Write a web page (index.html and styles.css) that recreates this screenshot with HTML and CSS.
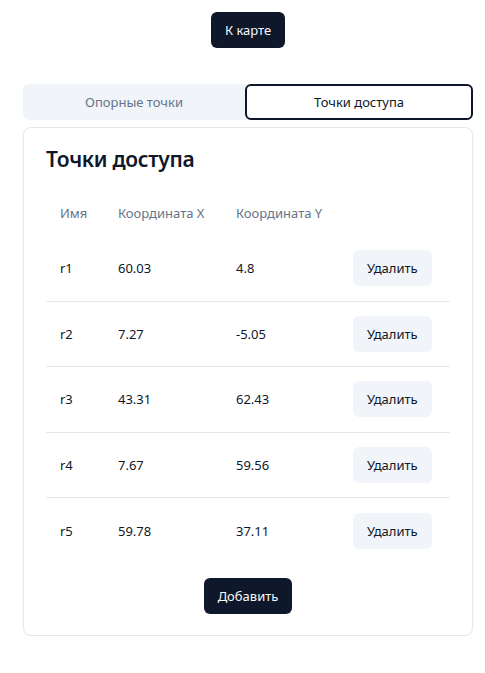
FILE: index.html
```html
<!DOCTYPE html>
<html lang="ru">
<head>
<meta charset="utf-8">
<link rel="stylesheet" href="styles.css">
</head>
<body>
<div class="page">
  <div class="top">
    <button class="btn btn-dark">К карте</button>
  </div>
  <div class="tabs">
    <button class="tab">Опорные точки</button>
    <button class="tab tab-active">Точки доступа</button>
  </div>
  <div class="card">
    <h2 class="card-title">Точки доступа</h2>
    <table class="table">
      <colgroup>
        <col class="c1"><col class="c2"><col class="c3"><col class="c4">
      </colgroup>
      <thead>
        <tr><th>Имя</th><th>Координата X</th><th>Координата Y</th><th></th></tr>
      </thead>
      <tbody>
        <tr><td>r1</td><td>60.03</td><td>4.8</td><td><button class="btn btn-light">Удалить</button></td></tr>
        <tr><td>r2</td><td>7.27</td><td>-5.05</td><td><button class="btn btn-light">Удалить</button></td></tr>
        <tr><td>r3</td><td>43.31</td><td>62.43</td><td><button class="btn btn-light">Удалить</button></td></tr>
        <tr><td>r4</td><td>7.67</td><td>59.56</td><td><button class="btn btn-light">Удалить</button></td></tr>
        <tr><td>r5</td><td>59.78</td><td>37.11</td><td><button class="btn btn-light">Удалить</button></td></tr>
      </tbody>
    </table>
    <div class="actions">
      <button class="btn btn-dark">Добавить</button>
    </div>
  </div>
</div>
</body>
</html>
```

FILE: styles.css
```css
* { box-sizing: border-box; }
body {
  margin: 0;
  background: #ffffff;
  font-family: "Noto Sans", "Open Sans", sans-serif;
  color: #0f172a;
}
.page {
  width: 450px;
  margin-left: 23px;
  padding-top: 12px;
}
.top {
  display: flex;
  justify-content: center;
  margin-bottom: 36px;
}
.btn {
  font-family: inherit;
  font-size: 13px;
  font-weight: 400;
  border: none;
  border-radius: 6px;
  height: 36px;
  padding: 0 14px;
  cursor: pointer;
}
.btn-dark {
  background: #0f172a;
  color: #f8fafc;
}
.btn-light {
  background: #f1f5f9;
  color: #0f172a;
}
.tabs {
  display: grid;
  grid-template-columns: 222px 1fr;
  height: 36px;
  background: #f1f5f9;
  border-radius: 6px;
}
.tab {
  font-family: inherit;
  font-size: 13px;
  font-weight: 400;
  border: none;
  background: transparent;
  color: #64748b;
  border-radius: 6px;
}
.tab-active {
  background: #ffffff;
  color: #0f172a;
  border: 2px solid #0f172a;
}
.card {
  margin-top: 7px;
  border: 1px solid #e2e8f0;
  border-radius: 8px;
  padding: 17px 22px 21px;
  box-shadow: 0 1px 2px rgba(0,0,0,0.04);
}
.card-title {
  margin: 0 0 17px;
  font-size: 21px;
  font-weight: 600;
  line-height: 28px;
  letter-spacing: -0.3px;
}
.table {
  width: 100%;
  border-collapse: collapse;
  table-layout: fixed;
  font-size: 13px;
}
.c1 { width: 58px; }
.c2 { width: 118px; }
.c3 { width: 117px; }
th {
  text-align: left;
  font-weight: 400;
  color: #64748b;
  height: 45.5px;
  padding: 0 14px;
}
td {
  padding: 0 14px;
  height: 65.5px;
}
tbody tr + tr td { border-top: 1px solid #e2e8f0; }
.actions {
  display: flex;
  justify-content: center;
  margin-top: 14.5px;
}
```
